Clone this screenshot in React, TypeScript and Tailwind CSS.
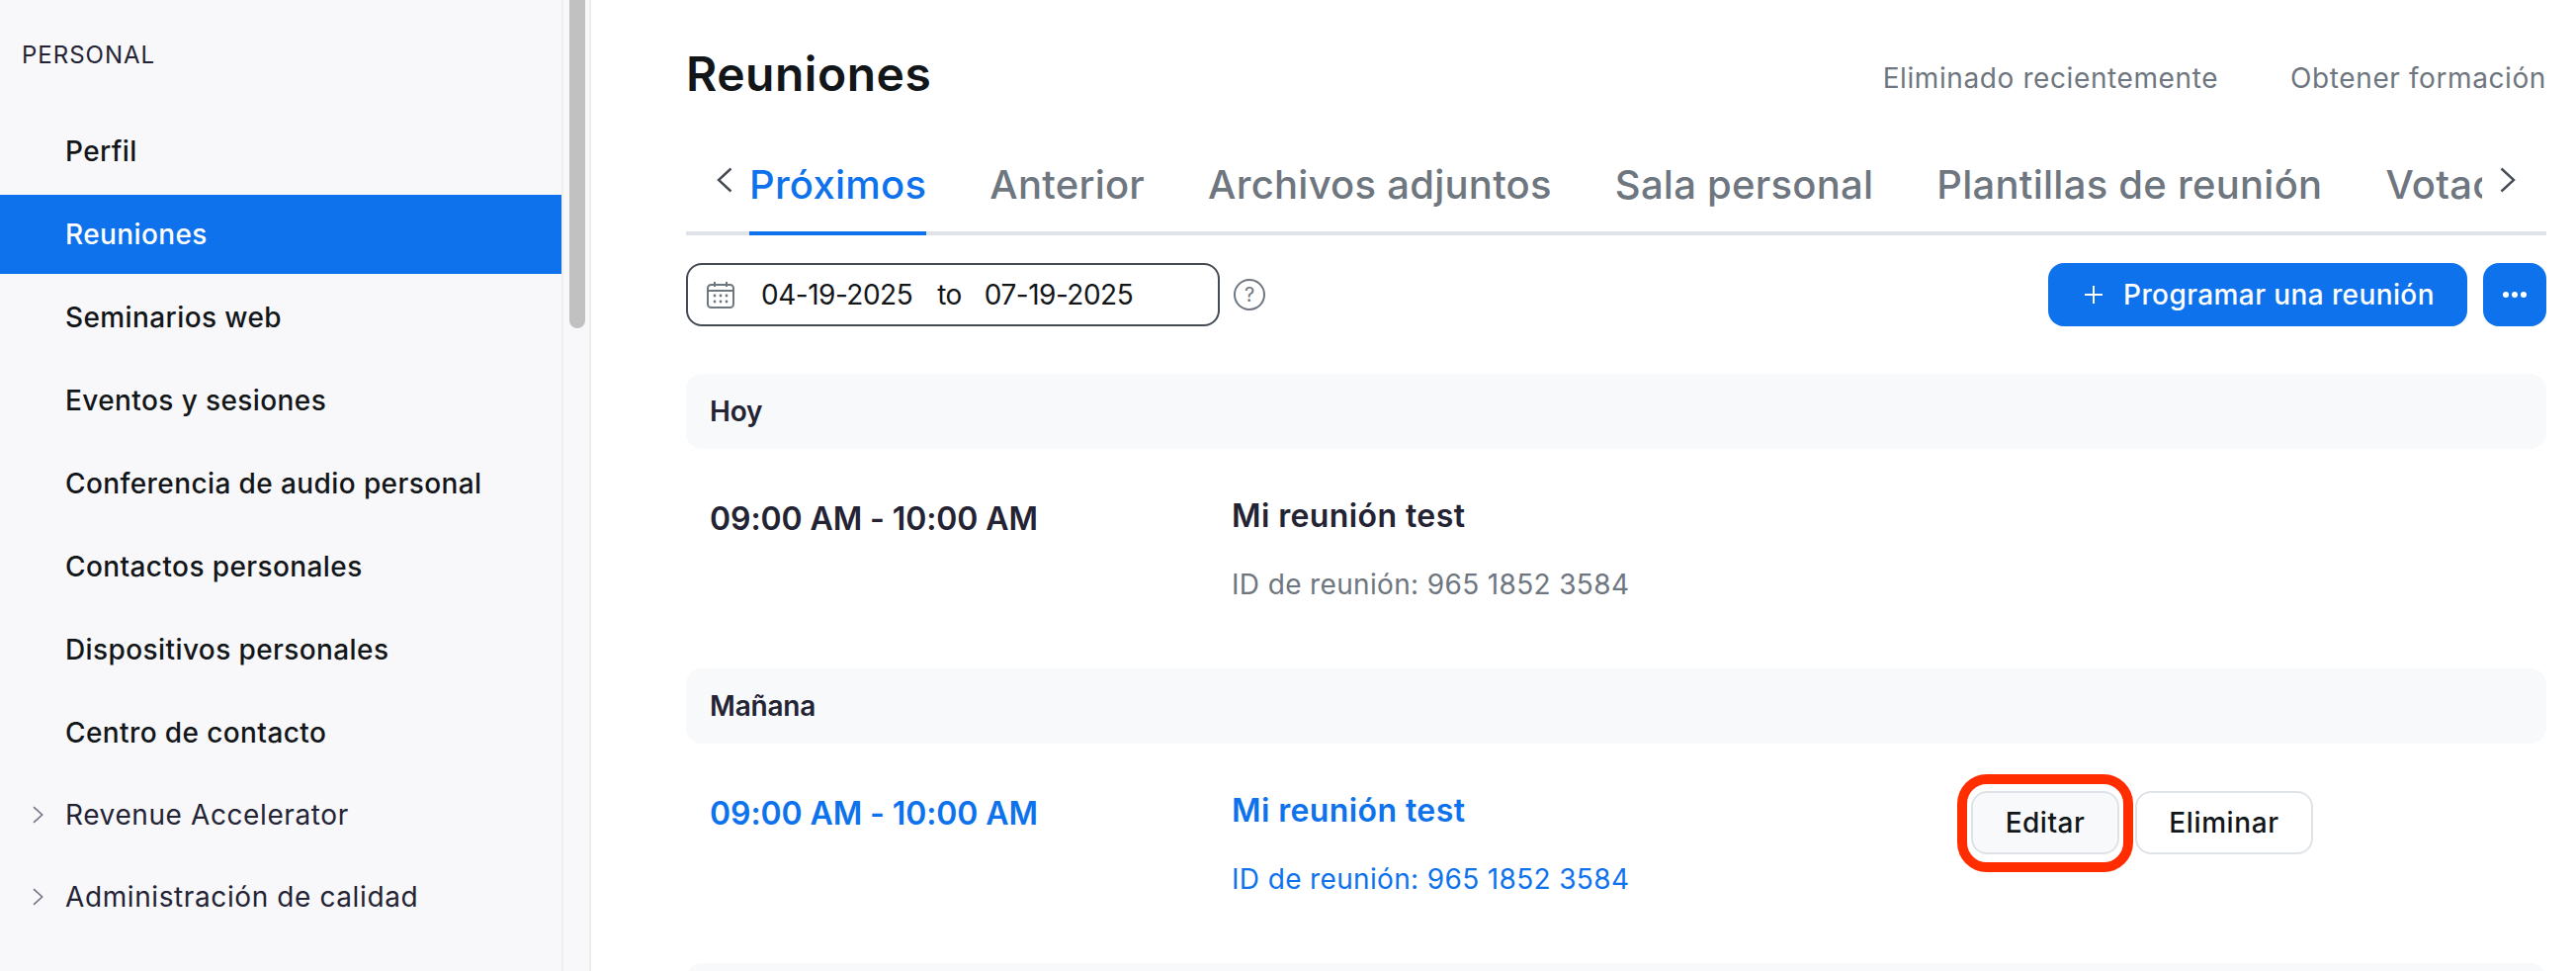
const nav: { label: string; active?: boolean; chevron?: boolean }[] = [
  { label: "Perfil" },
  { label: "Reuniones", active: true },
  { label: "Seminarios web" },
  { label: "Eventos y sesiones" },
  { label: "Conferencia de audio personal" },
  { label: "Contactos personales" },
  { label: "Dispositivos personales" },
  { label: "Centro de contacto" },
  { label: "Revenue Accelerator", chevron: true },
  { label: "Administración de calidad", chevron: true },
];

const tabs = ["Próximos", "Anterior", "Archivos adjuntos", "Sala personal", "Plantillas de reunión", "Votaciones"];

function Chevron({ dir, className }: { dir: "left" | "right"; className: string }) {
  return (
    <svg viewBox="0 0 16 26" fill="none" className={className}>
      <path
        d={dir === "left" ? "M14.5 1.5 2 13l12.5 11.5" : "M1.5 1.5 14 13 1.5 24.5"}
        stroke="currentColor"
        strokeWidth="2.4"
      />
    </svg>
  );
}

function CalendarIcon() {
  return (
    <svg viewBox="0 0 28 28" fill="none" className="w-[28px] h-[28px] text-[#6e7680]">
      <rect x="1" y="4" width="26" height="23" rx="3.5" stroke="currentColor" strokeWidth="2" />
      <path d="M1 10h26M8 1v5M20 1v5" stroke="currentColor" strokeWidth="2" />
      <g fill="currentColor">
        <circle cx="8" cy="15" r="1.4" />
        <circle cx="14" cy="15" r="1.4" />
        <circle cx="20" cy="15" r="1.4" />
        <circle cx="8" cy="21" r="1.4" />
        <circle cx="14" cy="21" r="1.4" />
        <circle cx="20" cy="21" r="1.4" />
      </g>
    </svg>
  );
}

function MeetingRow({ blue, actions }: { blue?: boolean; actions?: boolean }) {
  return (
    <div className="grid grid-cols-[528px_748px_auto] pl-[24px] h-[222px] shrink-0 pt-[51px]">
      <div className={`text-[32px] leading-[40px] font-semibold tracking-[-0.1px] ${blue ? "text-[#0e72ed]" : "text-[#232333]"}`}>
        09:00 AM - 10:00 AM
      </div>
      <div className="-mt-[2px]">
        <div className={`text-[32px] leading-[38px] font-semibold tracking-[0.4px] ${blue ? "text-[#0e72ed]" : "text-[#232333]"}`}>
          Mi reunión test
        </div>
        <div className={`mt-[32px] text-[28px] leading-[36px] tracking-[0.35px] ${blue ? "text-[#0e72ed]" : "text-[#6e7680]"}`}>
          ID de reunión: 965 1852 3584
        </div>
      </div>
      {actions && (
        <div className="flex gap-[16px] items-start -mt-[3px]">
          <div className="relative">
            <button className="w-[150px] h-[64px] rounded-[16px] border-2 border-[#dfe3e8] bg-[#f7f9fa] text-[28px] font-medium tracking-[0.5px] text-[#131619]">
              Editar
            </button>
            <div className="absolute left-[-14px] top-[-17px] w-[178px] h-[99px] rounded-[30px] border-[10px] border-[#ff2d00]" />
          </div>
          <button className="w-[180px] h-[64px] rounded-[16px] border-2 border-[#dfe3e8] bg-white text-[28px] font-medium tracking-[0.6px] text-[#131619]">
            Eliminar
          </button>
        </div>
      )}
    </div>
  );
}

function Band({ label }: { label: string }) {
  return (
    <div className="h-[76px] shrink-0 rounded-[16px] bg-[#f7f9fa] pl-[24px] flex items-center text-[28px] font-semibold tracking-[-0.2px] text-[#232333]">
      {label}
    </div>
  );
}

export default function App() {
  return (
    <div className="flex h-[982px] w-[2606px] overflow-hidden bg-white font-['Inter',sans-serif]">
      <aside className="w-[570px] shrink-0 bg-[#f8f8fb] border-r-2 border-[#eeeef0]">
        <div className="pl-[22px] pt-[41px] h-[113px] text-[24px] leading-[30px] tracking-[1px] text-[#232333]">PERSONAL</div>
        <div className="flex flex-col gap-[4px]">
          {nav.map((n) => (
            <div
              key={n.label}
              className={`h-[80px] shrink-0 flex items-center text-[28px] ${
                n.active
                  ? "bg-[#0e72ed] text-white font-medium tracking-[0.4px]"
                  : n.chevron
                    ? "text-[#232333] font-normal tracking-[0.6px] -mt-[1px]"
                    : "text-[#131619] font-medium tracking-[0.4px]"
              }`}
            >
              <div className="w-[66px] shrink-0 pl-[33px]">
                {n.chevron && <Chevron dir="right" className="w-[11px] h-[18px] text-[#747487]" />}
              </div>
              {n.label}
            </div>
          ))}
        </div>
      </aside>
      <div className="w-[28px] shrink-0 bg-[#f8f8fb] border-r-2 border-[#eeeef0] pl-[6px]">
        <div className="w-[16px] h-[332px] rounded-b-[8px] bg-[#c1c1c1]" />
      </div>
      <main className="w-[1882px] ml-[96px] flex flex-col">
        <div className="h-[150px] shrink-0 flex justify-between pt-[50px]">
          <h1 className="text-[48px] leading-[50px] font-semibold tracking-[0.5px] text-[#131619]">Reuniones</h1>
          <div className="flex gap-[73px] pt-[6px] text-[28px] leading-[46px] tracking-[0.6px] text-[#6e7680]">
            <span>Eliminado recientemente</span>
            <span>Obtener formación</span>
          </div>
        </div>
        <div className="relative h-[88px] shrink-0 border-b-4 border-[#dfe3e8]">
          <div className="h-[88px] ml-[64px] mr-[65px] flex gap-[64px] overflow-hidden">
            {tabs.map((t, i) => (
              <div
                key={t}
                className={`h-[88px] shrink-0 pt-[9px] text-[40px] leading-[56px] font-medium tracking-[0.25px] whitespace-nowrap ${
                  i === 0 ? "text-[#0e72ed] border-b-4 border-[#0e72ed]" : "text-[#6e7680]"
                }`}
              >
                {t}
              </div>
            ))}
          </div>
          <Chevron dir="left" className="absolute left-[31px] top-[19px] w-[16px] h-[26px] text-[#444b53]" />
          <Chevron dir="right" className="absolute right-[31px] top-[19px] w-[16px] h-[26px] text-[#444b53]" />
        </div>
        <div className="flex items-center mt-[28px] h-[64px] shrink-0">
          <div className="w-[540px] h-[64px] rounded-[16px] border-2 border-[#444b53] flex items-center pl-[19px] text-[28px] tracking-[-0.5px] text-[#131619]">
            <CalendarIcon />
            <span className="ml-[27px]">04-19-2025</span>
            <span className="ml-[25px]">to</span>
            <span className="ml-[23px]">07-19-2025</span>
          </div>
          <div className="ml-[14px] w-[32px] h-[32px] rounded-full border-2 border-[#6e7680] flex items-center justify-center text-[20px] text-[#6e7680]">
            ?
          </div>
          <button className="ml-auto w-[424px] h-[64px] rounded-[16px] bg-[#0e72ed] text-white flex items-center justify-center gap-[20px] pl-[3px] text-[28px] font-medium tracking-[0.4px]">
            <svg viewBox="0 0 20 20" className="w-[20px] h-[20px]" fill="none">
              <path d="M10 1v18M1 10h18" stroke="currentColor" strokeWidth="2" />
            </svg>
            Programar una reunión
          </button>
          <button className="ml-[16px] w-[64px] h-[64px] rounded-[16px] bg-[#0e72ed] flex items-center justify-center gap-[3px]">
            <span className="w-[6px] h-[6px] rounded-full bg-white" />
            <span className="w-[6px] h-[6px] rounded-full bg-white" />
            <span className="w-[6px] h-[6px] rounded-full bg-white" />
          </button>
        </div>
        <div className="mt-[48px] flex flex-col">
          <Band label="Hoy" />
          <MeetingRow />
          <Band label="Mañana" />
          <MeetingRow blue actions />
          <div className="h-[76px] shrink-0 rounded-[16px] bg-[#f7f9fa]" />
        </div>
      </main>
    </div>
  );
}
